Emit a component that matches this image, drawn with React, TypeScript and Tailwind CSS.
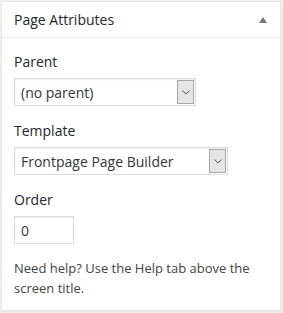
import React from "react";

const Chevron = () => (
  <svg width="8" height="5" viewBox="0 0 8 5" fill="none">
    <path d="M0.5 0.5 L4 4 L7.5 0.5" stroke="#555" strokeWidth="1" />
  </svg>
);

const SelectBox = ({ value, width }: { value: string; width: string }) => {
  return (
    <div
      className={`flex items-stretch h-[28px] ${width} border border-[#dddddd] bg-white shadow-[inset_0_1px_2px_rgba(0,0,0,0.07)]`}
    >
      <div className="flex-1 flex items-center pl-[6px] text-[14px] text-[#32373c]">
        {value}
      </div>
      <div className="w-[17px] my-px mr-px flex items-center justify-center bg-[#e5e5e5] border border-[#a9a9a9]">
        <Chevron />
      </div>
    </div>
  );
};

const App = () => {
  return (
    <div
      className="w-[283px] h-[313px] bg-[#f1f1f1] pl-px pt-px"
      style={{ fontFamily: '"Open Sans", "Noto Sans", sans-serif' }}
    >
      <div className="w-[280px] h-[310px] bg-white border border-[#e5e5e5] shadow-[0_1px_1px_rgba(0,0,0,0.04)]">
        <div className="flex items-center justify-between pl-3 pr-[13px] pt-2 pb-[7px] border-b border-[#eeeeee]">
          <h2 className="text-[14px] leading-5 text-[#23282d]">Page Attributes</h2>
          <svg width="8" height="6" viewBox="0 0 8 6">
            <path d="M4 0 L8 6 L0 6 Z" fill="#72777c" />
          </svg>
        </div>

        <div className="px-3 pb-3 text-[#444]">
          <p className="mt-[14px] mb-[6px] text-[14px] leading-5 text-[#23282d]">Parent</p>
          <SelectBox value="(no parent)" width="w-[182px]" />

          <p className="mt-[15px] mb-[6px] text-[14px] leading-5 text-[#23282d]">Template</p>
          <SelectBox value="Frontpage Page Builder" width="w-[214px]" />

          <p className="mt-[15px] mb-[6px] text-[14px] leading-5 text-[#23282d]">Order</p>
          <div className="w-[60px] h-[28px] flex items-center pl-[6px] border border-[#dddddd] bg-white shadow-[inset_0_1px_2px_rgba(0,0,0,0.07)] text-[14px] text-[#32373c]">
            0
          </div>

          <p className="mt-[15px] text-[13px] leading-[19.5px] text-[#444]">
            Need help? Use the Help tab above the screen title.
          </p>
        </div>
      </div>
    </div>
  );
};

export default App;
